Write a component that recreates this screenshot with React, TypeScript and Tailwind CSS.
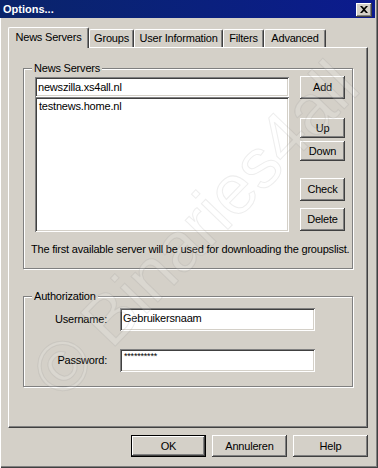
import React from 'react';

const raised =
    'shadow-[inset_-1px_-1px_#404040,inset_1px_1px_#ffffff,inset_-2px_-2px_#808080,inset_2px_2px_#d4d0c8]';
const sunken =
    'shadow-[inset_1px_1px_#808080,inset_-1px_-1px_#ffffff,inset_2px_2px_#404040,inset_-2px_-2px_#d4d0c8]';
const etched = 'border border-[#808080] shadow-[inset_1px_1px_#ffffff,1px_1px_#ffffff]';

function Button({ label, className = '' }: { label: string; className?: string }) {
    return (
        <div className={`flex items-center justify-center bg-[#d4d0c8] ${raised} ${className}`}>
            {label}
        </div>
    );
}

function Tab({ label, width }: { label: string; width: string }) {
    return (
        <div
            className={`mt-[2px] flex h-[18px] items-center justify-center rounded-t-[2px] border-l border-t border-white shadow-[inset_-1px_0_#808080] border-r border-r-[#404040] ${width}`}
        >
            {label}
        </div>
    );
}

export default function App() {
    return (
        <div className="relative h-[468px] w-[378px] overflow-hidden bg-[#d4d0c8] font-['Liberation_Sans',Arial,sans-serif] text-[11px] leading-[13px] tracking-[-0.2px] text-black shadow-[inset_1px_0_#ffffff,inset_-1px_-1px_#404040,inset_-2px_-2px_#808080]">
            {/* title bar */}
            <div className="flex h-[18px] w-[375px] items-center bg-gradient-to-r from-[#0a246a] to-[#0c1a8e] pl-[3px] pr-[3px]">
                <span className="text-[11px] font-bold tracking-normal text-white">Options...</span>
                <div className={`ml-auto mt-[1px] flex h-[14px] w-[16px] items-center justify-center bg-[#d4d0c8] ${raised}`}>
                    <svg width="8" height="7" viewBox="0 0 8 7" className="mb-[1px]">
                        <path d="M0 0h2l2 2 2-2h2L5 3.5 8 7H6L4 5 2 7H0l3-3.5z" fill="#000" />
                    </svg>
                </div>
            </div>

            {/* tabs */}
            <div className="ml-[8px] mt-[9px] flex h-[21px] items-start">
                <div className="relative z-10 flex h-[21px] w-[81px] items-center justify-center rounded-t-[2px] border-l border-t border-white border-r border-r-[#404040] bg-[#d4d0c8] pb-[2px] shadow-[inset_-1px_0_#808080]">
                    News Servers
                </div>
                <Tab label="Groups" width="w-[45px]" />
                <Tab label="User Information" width="w-[89px]" />
                <Tab label="Filters" width="w-[41px]" />
                <Tab label="Advanced" width="w-[62px]" />
            </div>

            {/* tab panel */}
            <div className="relative z-0 -mt-px ml-[8px] h-[381px] w-[360px] border-l border-t border-white border-r border-b border-r-[#404040] border-b-[#404040] shadow-[inset_-1px_-1px_#808080] pt-[20px] pl-[14px]">
                <div className={`relative h-[201px] w-[330px] ${etched} pl-[11px] pt-[8px]`}>
                    <span className="absolute -top-[7px] left-[8px] bg-[#d4d0c8] px-[2px]">News Servers</span>
                    <div className="flex gap-[11px]">
                        <div className="flex w-[254px] flex-col">
                            <div className={`flex h-[20px] items-center bg-white pl-[3px] ${sunken}`}>
                                newszilla.xs4all.nl
                            </div>
                            <div className={`h-[135px] bg-white pl-[4px] pt-[3px] ${sunken}`}>testnews.home.nl</div>
                        </div>
                        <div className="-mt-px flex w-[45px] flex-col">
                            <Button label="Add" className="h-[23px]" />
                            <Button label="Up" className="mt-[19px] h-[20px]" />
                            <Button label="Down" className="mt-[3px] h-[20px]" />
                            <Button label="Check" className="mt-[17px] h-[23px]" />
                            <Button label="Delete" className="mt-[7px] h-[23px]" />
                        </div>
                    </div>
                    <div className="-ml-[4px] mt-[11px] whitespace-nowrap">
                        The first available server will be used for downloading the groupslist.
                    </div>
                </div>

                <div className={`relative mt-[27px] h-[91px] w-[330px] ${etched} pt-[11px]`}>
                    <span className="absolute -top-[7px] left-[8px] bg-[#d4d0c8] px-[2px]">Authorization</span>
                    <div className="flex items-center">
                        <div className="w-[83px] text-right">Username:</div>
                        <div className={`ml-[13px] flex h-[23px] w-[195px] items-center bg-white pb-[2px] pl-[3px] ${sunken}`}>
                            Gebruikersnaam
                        </div>
                    </div>
                    <div className="mt-[18px] flex items-center">
                        <div className="w-[83px] text-right">Password:</div>
                        <div className={`ml-[13px] h-[23px] w-[195px] bg-white pl-[4px] pt-[2px] text-[9px] leading-[10px] ${sunken}`}>
                            **********
                        </div>
                    </div>
                </div>
            </div>

            {/* dialog buttons */}
            <div className="mt-[7px] flex justify-end gap-[6px] pr-[10px]">
                <div className="border border-black">
                    <Button label="OK" className="h-[20px] w-[73px]" />
                </div>
                <Button label="Annuleren" className="h-[22px] w-[75px]" />
                <Button label="Help" className="h-[22px] w-[75px]" />
            </div>

            {/* watermark */}
            <div className="pointer-events-none absolute left-[195px] top-[229px] z-20 -translate-x-1/2 -translate-y-1/2 rotate-[-46deg] whitespace-nowrap font-['Liberation_Sans',Arial,sans-serif] text-[70px] leading-none tracking-normal text-[rgba(255,255,255,0.15)] [-webkit-text-stroke:1px_rgba(130,130,130,0.14)]">
                © Binaries4all
            </div>
        </div>
    );
}
